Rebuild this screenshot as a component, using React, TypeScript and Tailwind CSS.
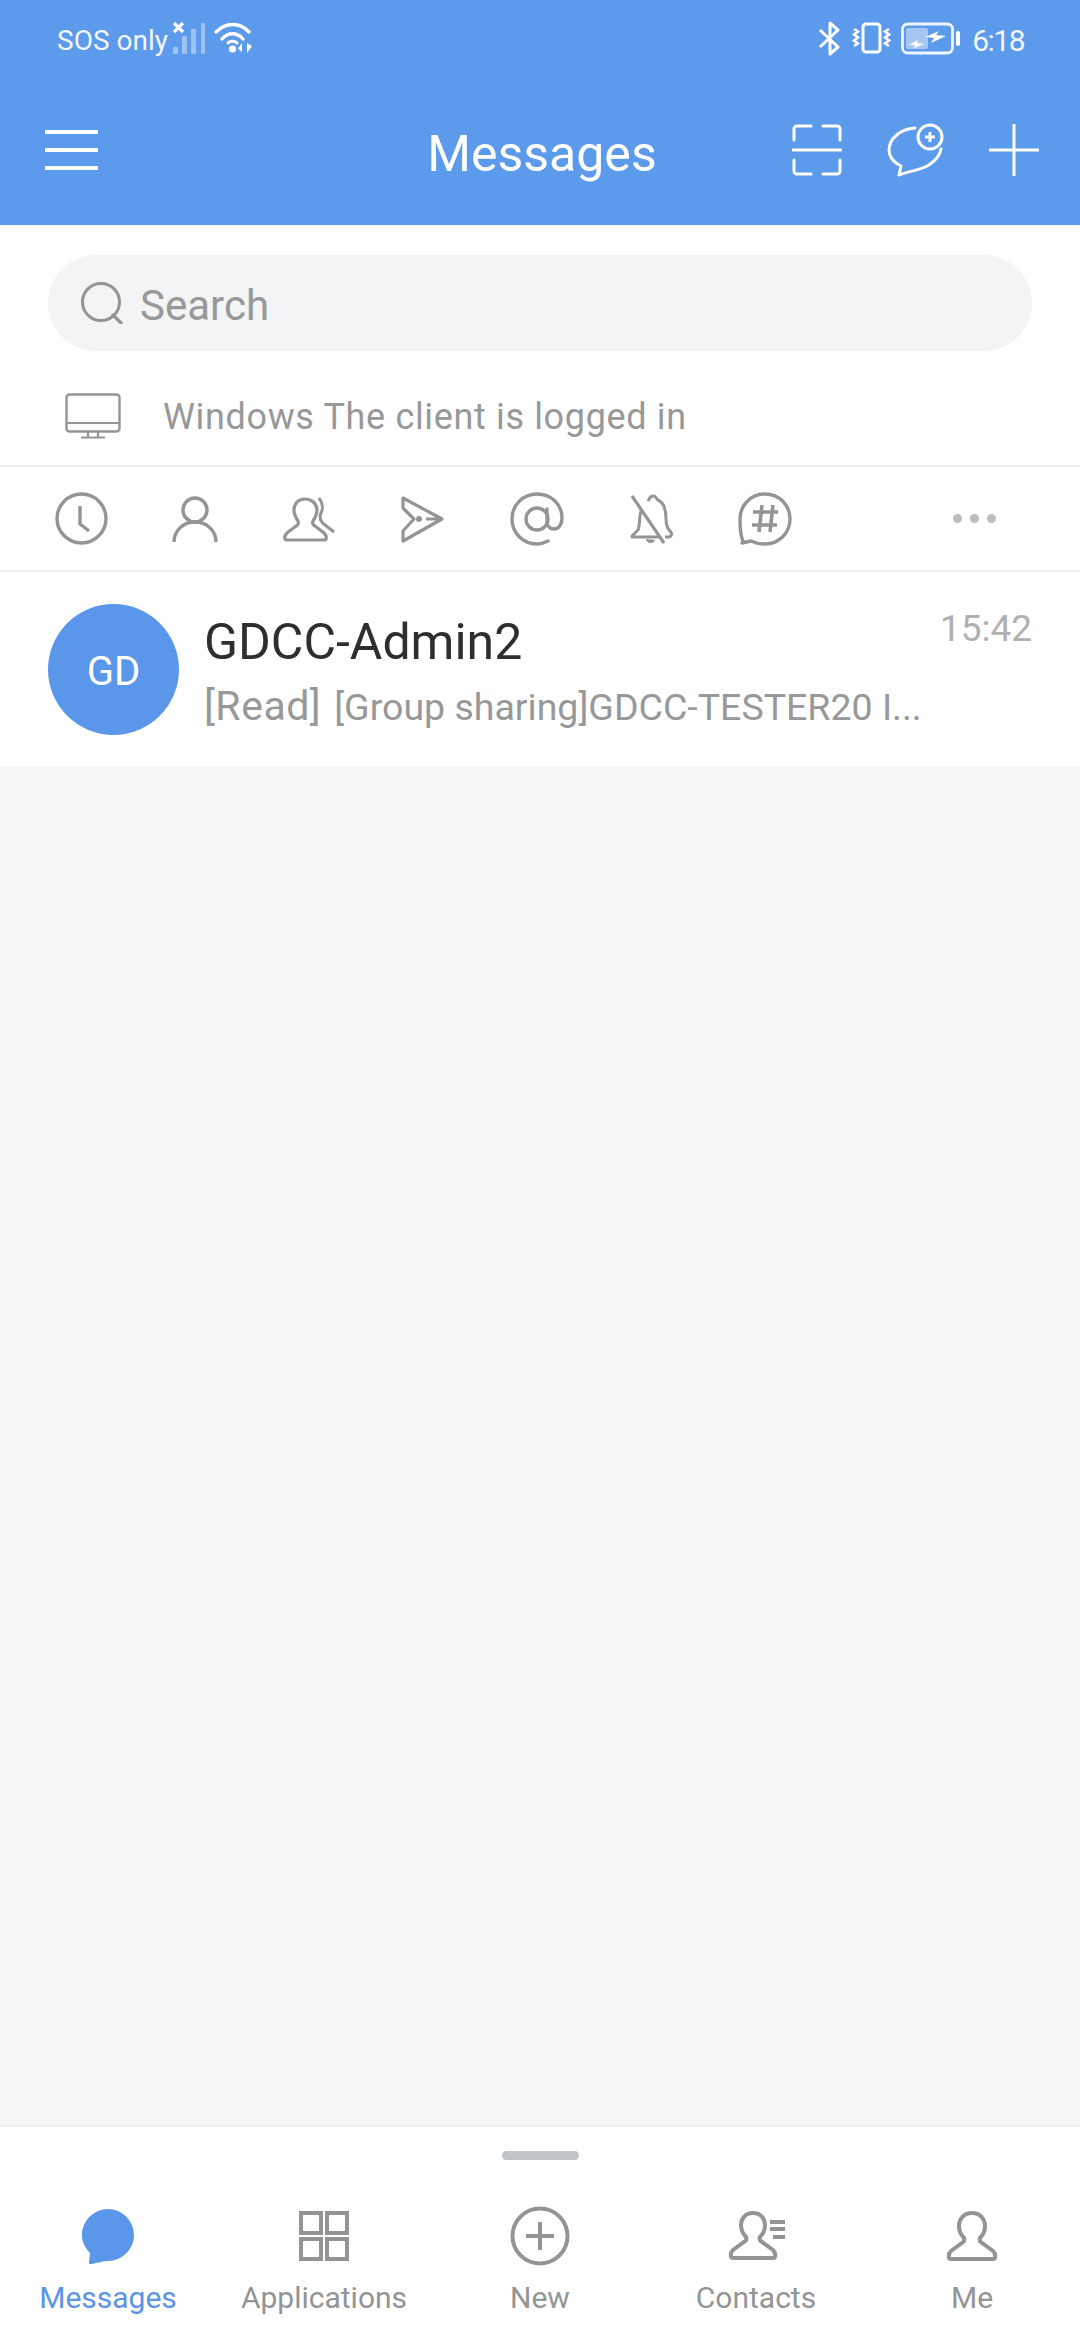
import React from "react";

const G = "#939495";

function Signal() {
  return (
    <svg width="36" height="34" viewBox="0 0 36 34" fill="none">
      <rect x="1" y="26" width="5" height="7" rx="1" fill="#fff" fillOpacity="0.4" />
      <rect x="10" y="15" width="5" height="18" rx="1" fill="#fff" fillOpacity="0.4" />
      <rect x="19" y="8" width="5" height="25" rx="1" fill="#fff" fillOpacity="0.4" />
      <rect x="29" y="2" width="4" height="31" rx="1" fill="#fff" fillOpacity="0.4" />
      <path d="M2 2l9 9M11 2l-9 9" stroke="#fff" strokeWidth="3.2" />
    </svg>
  );
}
function Wifi() {
  return (
    <svg width="40" height="34" viewBox="0 0 40 34" fill="none">
      <path d="M2 11C12 1 26 1 35 11" stroke="#fff" strokeWidth="3.4" strokeLinecap="round" />
      <path d="M8 18C14 11 23 11 29 18" stroke="#fff" strokeWidth="3.4" strokeLinecap="round" />
      <circle cx="18.5" cy="28" r="3.6" fill="#fff" />
      <path d="M14 22C16 19.5 21 19.5 23 22" stroke="#fff" strokeWidth="3" strokeLinecap="round" />
      <path d="M28 22v9l-4-3.5zM33 22v10l5-7z" fill="#fff" />
    </svg>
  );
}
function Bluetooth() {
  return (
    <svg width="23" height="35" viewBox="0 0 23 35" fill="none">
      <path d="M2 9l18 17-8 7V2l8 7L2 26" stroke="#fff" strokeWidth="3" strokeLinejoin="round" />
    </svg>
  );
}
function Vibrate() {
  return (
    <svg width="39" height="32" viewBox="0 0 39 32" fill="none">
      <rect x="11" y="2" width="17" height="28" rx="3" stroke="#fff" strokeWidth="3" />
      <path d="M2 7l4 2.5-4 3 4 3-4 3 4 3-4 2.5M37 7l-4 2.5 4 3-4 3 4 3-4 3 4 2.5" stroke="#fff" strokeWidth="2.6" />
    </svg>
  );
}
function Battery() {
  return (
    <svg width="60" height="33" viewBox="0 0 60 33" fill="none">
      <rect x="1.5" y="2" width="50" height="29" rx="5" stroke="#fff" strokeOpacity="0.9" strokeWidth="2.8" />
      <rect x="5" y="6" width="22" height="21" rx="2" fill="#fff" fillOpacity="0.45" />
      <rect x="55" y="9" width="4" height="15" rx="2" fill="#fff" />
      <path d="M24 15l14-6-3 4 10 1-15 7 3-5zM8 23l9-5-1 3 7 1-10 4 1-3z" fill="#fff" />
    </svg>
  );
}
function Menu() {
  return (
    <svg width="53" height="40" viewBox="0 0 53 40" fill="none">
      <path d="M0 2h53M0 20h53M0 38h53" stroke="#fff" strokeWidth="4" />
    </svg>
  );
}
function Scan() {
  return (
    <svg width="50" height="52" viewBox="0 0 50 52" fill="none">
      <path d="M19 2H5a3 3 0 0 0-3 3v11M31 2h14a3 3 0 0 1 3 3v11M19 50H5a3 3 0 0 1-3-3V36M31 50h14a3 3 0 0 0 3-3V36" stroke="#fff" strokeWidth="3" strokeLinecap="round" />
      <path d="M1 26h48" stroke="#fff" strokeWidth="3" strokeLinecap="round" />
    </svg>
  );
}
function ChatPlus() {
  return (
    <svg width="57" height="54" viewBox="0 0 57 54" fill="none">
      <path d="M28 5C13 6 2 16 2 27c0 7 4 12 12 16l-2 9c10-4 22-5 30-10 6-4 11-10 12-16" stroke="#fff" strokeWidth="3" strokeLinecap="round" strokeLinejoin="round" />
      <circle cx="43" cy="14" r="12" fill="#5c9aeb" stroke="#fff" strokeWidth="3" />
      <path d="M38 14h10M43 9v10" stroke="#fff" strokeWidth="3" />
    </svg>
  );
}
function Plus() {
  return (
    <svg width="50" height="52" viewBox="0 0 50 52" fill="none">
      <path d="M0 26h50M25 0v52" stroke="#fff" strokeWidth="3" />
    </svg>
  );
}
function Search() {
  return (
    <svg width="42" height="42" viewBox="0 0 42 42" fill="none">
      <circle cx="20" cy="20" r="18.5" stroke={G} strokeWidth="3" />
      <path d="M32 33l8 8" stroke={G} strokeWidth="3.2" strokeLinecap="round" />
    </svg>
  );
}
function Monitor() {
  return (
    <svg width="56" height="46" viewBox="0 0 56 46" fill="none">
      <rect x="1.5" y="1.5" width="53" height="37" rx="3" stroke={G} strokeWidth="2.4" />
      <path d="M2 30h52M23 39v5M33 39v5M16 44.5h24" stroke={G} strokeWidth="2.2" />
    </svg>
  );
}
function Clock() {
  return (
    <svg width="53" height="53" viewBox="0 0 53 53" fill="none">
      <circle cx="26.5" cy="26.5" r="24.5" stroke={G} strokeWidth="3.4" />
      <path d="M25 14v18l9 7" stroke={G} strokeWidth="3.4" />
    </svg>
  );
}
function Person() {
  return (
    <svg width="46" height="46" viewBox="0 0 46 46" fill="none">
      <circle cx="23" cy="14" r="12" stroke={G} strokeWidth="3.4" />
      <path d="M2 46c0-11 9-20 21-20s21 9 21 20" stroke={G} strokeWidth="3.4" />
    </svg>
  );
}
function Group() {
  return (
    <svg width="52" height="46" viewBox="0 0 52 46" fill="none">
      <path d="M22 3c-7 0-11 5-11 11 0 5 2 8 4 11 1 2 0 4-2 5l-9 7c-3 3-3 7 0 7h37c3 0 3-4 0-7l-9-7c-2-1-3-3-2-5 2-3 4-6 4-11 0-6-5-11-12-11z" stroke={G} strokeWidth="3.2" />
      <path d="M36 2c4 5 4 11 2 15-2 5 0 9 4 12l9 7" stroke={G} strokeWidth="3" fill="none" />
    </svg>
  );
}
function Send() {
  return (
    <svg width="44" height="48" viewBox="0 0 44 48" fill="none">
      <path d="M2 3l39 21L2 46V36l11-12L2 13z" stroke={G} strokeWidth="3.2" strokeLinejoin="round" />
      <circle cx="18" cy="24" r="3" fill={G} />
      <path d="M25 24h14" stroke={G} strokeWidth="3" />
    </svg>
  );
}
function At() {
  return (
    <svg width="54" height="54" viewBox="0 0 54 54" fill="none">
      <path d="M38 49c-4 2-7 3-11 3C13 52 2 41 2 27S13 2 27 2s25 10 25 24c0 6-3 11-8 11-4 0-7-3-7-7V17" stroke={G} strokeWidth="3.4" strokeLinecap="round" />
      <circle cx="27" cy="27" r="11" stroke={G} strokeWidth="3.4" />
    </svg>
  );
}
function BellOff() {
  return (
    <svg width="44" height="50" viewBox="0 0 44 50" fill="none">
      <path d="M12 17c-2 6-1 15-3 19l-6 6v1h27M19 7c2-4 3-5 6-5 2 0 2 3 4 4 7 3 8 11 8 19 0 5 1 9 4 12 2 2 2 4 0 6h-5" stroke={G} strokeWidth="3" strokeLinejoin="round" />
      <path d="M3 2l32 47" stroke={G} strokeWidth="3.2" />
      <path d="M17 45c0 5 8 5 9 1z" fill={G} />
    </svg>
  );
}
function Hash() {
  return (
    <svg width="54" height="54" viewBox="0 0 54 54" fill="none">
      <path d="M5 49c-3-6-3-14-3-22C2 13 13 2 27 2s25 11 25 25-11 25-25 25c-6 0-10-1-14-3l-9 2z" stroke={G} strokeWidth="3.4" strokeLinejoin="round" />
      <path d="M15 20h25M14 33h25M24 13l-3 27M35 13l-3 27" stroke={G} strokeWidth="3.6" />
    </svg>
  );
}
function NavChat() {
  return (
    <svg width="54" height="56" viewBox="0 0 54 56" fill="none">
      <path d="M27 1c14 0 26 12 26 26S41 53 27 53c-5 0-11 2-16 3-2 1-3 0-3-2l1-9C4 40 1 34 1 27 1 13 13 1 27 1z" fill="#5a96ea" />
    </svg>
  );
}
function NavApps() {
  return (
    <svg width="50" height="50" viewBox="0 0 50 50" fill="none">
      <path d="M2 2h20v20H2zM28 2h20v20H28zM2 28h20v20H2zM28 28h20v20H28z" stroke={G} strokeWidth="4" />
    </svg>
  );
}
function NavNew() {
  return (
    <svg width="60" height="60" viewBox="0 0 60 60" fill="none">
      <circle cx="30" cy="30" r="27.5" stroke={G} strokeWidth="4" />
      <path d="M16 30h28M30 16v28" stroke={G} strokeWidth="4" />
    </svg>
  );
}
function NavContacts() {
  return (
    <svg width="57" height="50" viewBox="0 0 57 50" fill="none">
      <path d="M25 2c-8 0-12 6-12 12 0 5 2 9 5 12 1 2 0 4-2 5L5 39c-3 3-3 8 0 8h40c3 0 3-5 0-8l-11-8c-2-1-3-3-2-5 3-3 5-7 5-12 0-6-4-12-12-12z" stroke={G} strokeWidth="4" />
      <path d="M42 11h15M42 18h15M45 26h12" stroke={G} strokeWidth="4" />
    </svg>
  );
}
function NavMe() {
  return (
    <svg width="52" height="52" viewBox="0 0 52 52" fill="none">
      <path d="M26 3c-8 0-13 6-13 13 0 5 2 9 5 12 1 2 0 4-2 5L5 41c-3 3-3 8 0 8h42c3 0 3-5 0-8l-11-8c-2-1-3-3-2-5 3-3 5-7 5-12 0-7-5-13-13-13z" stroke={G} strokeWidth="4" />
    </svg>
  );
}

const filters = [Clock, Person, Group, Send, At, BellOff, Hash];
const nav = [
  { label: "Messages", Icon: NavChat, active: true },
  { label: "Applications", Icon: NavApps, active: false },
  { label: "New", Icon: NavNew, active: false },
  { label: "Contacts", Icon: NavContacts, active: false },
  { label: "Me", Icon: NavMe, active: false },
];

export default function App() {
  return (
    <div className="flex h-[2340px] w-[1080px] flex-col overflow-hidden bg-[#f7f7f8] font-['Roboto',sans-serif]">
      <header className="h-[225px] shrink-0 bg-[#5c9aeb] text-white">
        <div className="flex h-[76px] items-center justify-between pl-[57px] pr-[56px]">
          <div className="flex items-center">
            <span className="mt-[5px] text-[28px] leading-none text-white/95">SOS only</span>
            <span className="ml-[4px]"><Signal /></span>
            <span className="ml-[6px]"><Wifi /></span>
          </div>
          <div className="flex items-center">
            <Bluetooth />
            <span className="ml-[11px]"><Vibrate /></span>
            <span className="ml-[10px]"><Battery /></span>
            <span className="ml-[11px] mt-[5px] text-[30px] leading-none tracking-[-1.5px] text-white/95">6:18</span>
          </div>
        </div>
        <div className="grid h-[149px] grid-cols-[1fr_auto_1fr] items-center pb-[2px] pl-[45px] pr-[41px]">
          <Menu />
          <div className="mt-[9px] text-[50px] leading-none">Messages</div>
          <div className="flex items-center justify-end gap-[45px]">
            <Scan />
            <ChatPlus />
            <Plus />
          </div>
        </div>
      </header>

      <section className="shrink-0 bg-white">
        <div className="px-[48px] pt-[30px]">
          <div className="flex h-[96px] items-center rounded-full bg-[#f3f4f6] pl-[33px]">
            <Search />
            <span className="ml-[17px] mt-[6px] text-[42px] leading-none text-[#979898]">Search</span>
          </div>
        </div>
        <div className="flex h-[114px] items-center pl-[65px] pt-[16px]">
          <Monitor />
          <span className="ml-[42px] mt-[2px] text-[36px] leading-none tracking-[0.65px] text-[#979898]">Windows The client is logged in</span>
        </div>
      </section>

      <nav className="flex h-[107px] shrink-0 items-center border-y-2 border-[#eeeeee] bg-white pl-[24px]">
        {filters.map((Icon, i) => (
          <div key={i} className="flex w-[114px] items-center justify-center">
            <Icon />
          </div>
        ))}
        <div className="ml-auto mr-[84px] flex gap-[8px]">
          <span className="h-[9px] w-[9px] rounded-full bg-[#bdbdbd]" />
          <span className="h-[9px] w-[9px] rounded-full bg-[#bdbdbd]" />
          <span className="h-[9px] w-[9px] rounded-full bg-[#bdbdbd]" />
        </div>
      </nav>

      <article className="flex h-[195px] shrink-0 items-center bg-white pl-[48px] pr-[48px]">
        <div className="flex h-[131px] w-[131px] shrink-0 items-center justify-center rounded-full bg-[#5a96ea] pt-[4px] text-[40px] text-white">GD</div>
        <div className="ml-[25px] min-w-0 flex-1 pt-[6px]">
          <div className="flex items-start justify-between">
            <span className="text-[50px] leading-[58px] text-[#2e2e2e]">GDCC-Admin2</span>
            <span className="mt-[-6px] text-[37px] leading-[44px] text-[#b0b0b0]">15:42</span>
          </div>
          <div className="mt-[10px] flex items-baseline whitespace-nowrap leading-[50px] text-[#979898]">
            <span className="text-[41px] tracking-[0.5px]">[Read]</span>
            <span className="ml-[13px] text-[37.5px]">[Group sharing]GDCC-TESTER20 I...</span>
          </div>
        </div>
      </article>

      <div className="flex-1" />

      <footer className="h-[215px] shrink-0 border-t-2 border-[#eeeeee] bg-white">
        <div className="mx-auto mt-[24px] h-[9px] w-[77px] rounded-full bg-[#c0c5ca]" />
        <div className="mt-[46px] grid grid-cols-5">
          {nav.map(({ label, Icon, active }) => (
            <div key={label} className="flex flex-col items-center">
              <div className="flex h-[60px] items-center justify-center">
                <Icon />
              </div>
              <span className={`mt-[14px] text-[30px] leading-[36px] ${active ? "text-[#5b94e6]" : "text-[#939495]"}`}>{label}</span>
            </div>
          ))}
        </div>
      </footer>
    </div>
  );
}
